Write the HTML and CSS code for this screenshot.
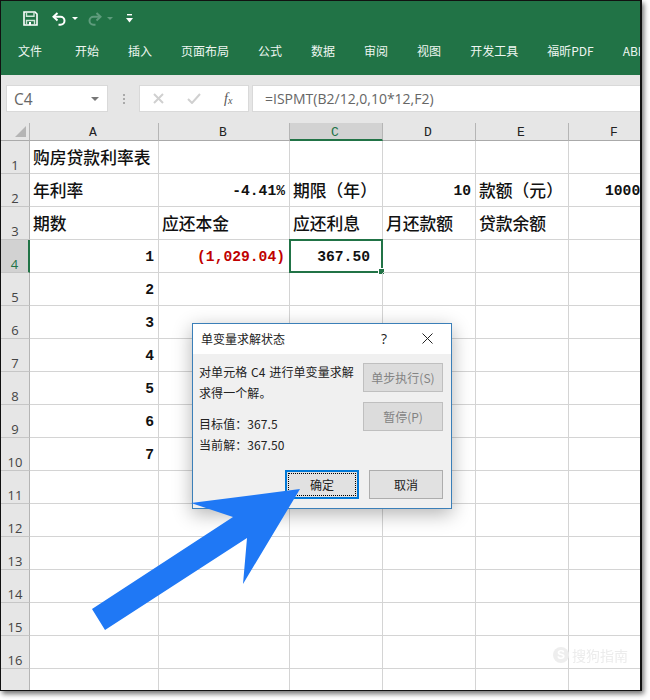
FILE: index.html
```html
<!DOCTYPE html>
<html lang="zh">
<head>
<meta charset="utf-8">
<title>单变量求解状态</title>
<link rel="stylesheet" href="styles.css">
</head>
<body>
<div class="window">
  <header class="ribbon">
    <div class="qat">
      <svg class="i-save" width="15" height="15" viewBox="0 0 15 15"><path d="M1 1h11l2 2v11H1z" fill="none" stroke="#fff" stroke-width="1.6"/><path d="M3.500 1v4.200h7.500V1" fill="none" stroke="#cfe6d8" stroke-width="1.4"/><path d="M3.500 14V9.500h8V14" fill="none" stroke="#cfe6d8" stroke-width="1.4"/><rect x="6" y="11" width="2" height="3" fill="#fff"/></svg>
      <svg class="i-undo" width="15" height="14" viewBox="0 0 15 14"><path d="M5.500 1 1.500 4.700 5.500 8.400" fill="none" stroke="#fff" stroke-width="2"/><path d="M2 4.700h6.500a4 4 0 0 1 0 8H6.500" fill="none" stroke="#fff" stroke-width="2"/></svg>
      <span class="caret"></span>
      <svg class="i-redo" width="15" height="14" viewBox="0 0 15 14"><path d="M9.500 1 13.500 4.700 9.500 8.400" fill="none" stroke="#5f9c7d" stroke-width="2"/><path d="M13 4.700H6.500a4 4 0 0 0 0 8h2" fill="none" stroke="#5f9c7d" stroke-width="2"/></svg>
      <span class="caret dim"></span>
      <svg class="i-more" width="7" height="9" viewBox="0 0 7 9"><rect x="1" y="0" width="5" height="1.400" fill="#fff"/><path d="M0 4h7L3.500 8.500z" fill="#fff"/></svg>
    </div>
    <nav class="tabs">
      <span class="file">文件</span><span>开始</span><span>插入</span><span>页面布局</span><span>公式</span><span>数据</span><span>审阅</span><span>视图</span><span>开发工具</span><span>福昕PDF</span><span>ABI</span>
    </nav>
  </header>
  <div class="fbar">
    <div class="namebox"><span>C4</span><i class="nb-caret"></i></div>
    <div class="dots"><i></i><i></i><i></i></div>
    <div class="fxbox">
      <svg width="11" height="11" viewBox="0 0 11 11"><path d="M1 1 10 10M10 1 1 10" stroke="#d0d0d0" stroke-width="2"/></svg>
      <svg width="14" height="11" viewBox="0 0 14 11"><path d="M1 6 5 10 13 1" fill="none" stroke="#d0d0d0" stroke-width="2"/></svg>
      <span class="fx">f<sub>x</sub></span>
    </div>
    <div class="formula">=ISPMT(B2/12,0,10*12,F2)</div>
  </div>
  <div class="sheet">
    <div class="corner"><i></i></div>
    <div class="ch">A</div><div class="ch">B</div><div class="ch sel">C</div><div class="ch">D</div><div class="ch">E</div><div class="ch">F</div>

    <div class="rh">1</div><div class="c">购房贷款利率表</div><div class="c"></div><div class="c"></div><div class="c"></div><div class="c"></div><div class="c"></div>
    <div class="rh">2</div><div class="c">年利率</div><div class="c n">-4.41%</div><div class="c">期限（年）</div><div class="c n">10</div><div class="c">款额（元）</div><div class="c n clip">1000</div>
    <div class="rh">3</div><div class="c">期数</div><div class="c">应还本金</div><div class="c">应还利息</div><div class="c">月还款额</div><div class="c">贷款余额</div><div class="c"></div>
    <div class="rh sel">4</div><div class="c n">1</div><div class="c n red">(1,029.04)</div><div class="c n active">367.50</div><div class="c"></div><div class="c"></div><div class="c"></div>
    <div class="rh">5</div><div class="c n">2</div><div class="c"></div><div class="c"></div><div class="c"></div><div class="c"></div><div class="c"></div>
    <div class="rh">6</div><div class="c n">3</div><div class="c"></div><div class="c"></div><div class="c"></div><div class="c"></div><div class="c"></div>
    <div class="rh">7</div><div class="c n">4</div><div class="c"></div><div class="c"></div><div class="c"></div><div class="c"></div><div class="c"></div>
    <div class="rh">8</div><div class="c n">5</div><div class="c"></div><div class="c"></div><div class="c"></div><div class="c"></div><div class="c"></div>
    <div class="rh">9</div><div class="c n">6</div><div class="c"></div><div class="c"></div><div class="c"></div><div class="c"></div><div class="c"></div>
    <div class="rh">10</div><div class="c n">7</div><div class="c"></div><div class="c"></div><div class="c"></div><div class="c"></div><div class="c"></div>
    <div class="rh">11</div><div class="c"></div><div class="c"></div><div class="c"></div><div class="c"></div><div class="c"></div><div class="c"></div>
    <div class="rh">12</div><div class="c"></div><div class="c"></div><div class="c"></div><div class="c"></div><div class="c"></div><div class="c"></div>
    <div class="rh">13</div><div class="c"></div><div class="c"></div><div class="c"></div><div class="c"></div><div class="c"></div><div class="c"></div>
    <div class="rh">14</div><div class="c"></div><div class="c"></div><div class="c"></div><div class="c"></div><div class="c"></div><div class="c"></div>
    <div class="rh">15</div><div class="c"></div><div class="c"></div><div class="c"></div><div class="c"></div><div class="c"></div><div class="c"></div>
    <div class="rh">16</div><div class="c"></div><div class="c"></div><div class="c"></div><div class="c"></div><div class="c"></div><div class="c"></div>
    <div class="rh"></div><div class="c"></div><div class="c"></div><div class="c"></div><div class="c"></div><div class="c"></div><div class="c"></div>
  </div>

  <section class="dialog">
    <div class="d-title">
      <span class="d-name">单变量求解状态</span>
      <span class="d-help">?</span>
      <svg class="d-close" width="11" height="11" viewBox="0 0 11 11"><path d="M.5.500 10.500 10.500M10.500.500.500 10.500" stroke="#222" stroke-width="1"/></svg>
    </div>
    <div class="d-body">
      <div class="d-main">
        <div class="d-msg">
          <p>对单元格 C4 进行单变量求解</p>
          <p>求得一个解。</p>
          <p class="d-gap">目标值：367.5</p>
          <p>当前解：367.50</p>
        </div>
        <div class="d-side">
          <div class="btn off">单步执行(S)</div>
          <div class="btn off">暂停(P)</div>
        </div>
      </div>
      <div class="d-foot">
        <div class="btn ok"><span>确定</span></div>
        <div class="btn cancel">取消</div>
      </div>
    </div>
  </section>

  <svg class="arrow" width="650" height="700" viewBox="1 1 650 700"><polygon points="92,609 105,630 247,538 243,584 300,489 191,503 233,517" fill="#1f78f5"/></svg>

  <div class="mark"><b>S</b><span>搜狗指南</span></div>
</div>
</body>
</html>
```
FILE: styles.css
```css
* { box-sizing: border-box; }
html, body { margin: 0; padding: 0; background: #fff; }
body { width: 650px; height: 700px; overflow: hidden; font-family: "Noto Sans CJK SC", sans-serif; }
p { margin: 0; }

.window {
  position: relative;
  width: 642px;
  height: 691px;
  border: 1px solid #111;
  border-right-width: 2px;
  background: #fff;
  overflow: hidden;
  box-shadow: 2px 3px 5px rgba(0,0,0,.55);
}
.ribbon { height: 74px; background: #217346; color: #fff; padding-top: 9px; }
.qat { display: flex; align-items: center; height: 17px; padding-left: 22px; }
.i-undo { margin-left: 14px; }
.caret { width: 0; height: 0; margin-left: 5px; border: 3px solid transparent; border-top-color: #fff; border-bottom: 0; }
.caret.dim { border-top-color: #5f9c7d; }
.i-redo { margin-left: 9px; }
.i-more { margin-left: 13px; }
.tabs { display: flex; gap: 29px; padding: 12px 0 0 17px; font-size: 12px; line-height: 24px; white-space: nowrap; color: #eef6f1; }
.file { margin-right: 4px; }

.fbar { display: flex; align-items: stretch; height: 48px; padding: 10px 0 11px 5px; background: #e6e6e6; }
.namebox { width: 102px; background: #fff; border: 1px solid #d9d9d9; display: flex; align-items: center; justify-content: space-between; padding: 0 8px 0 7px; font: 15.5px "Open Sans", sans-serif; color: #666; }
.nb-caret { width: 0; height: 0; border: 4px solid transparent; border-top: 4px solid #777; border-bottom: 0; }
.dots { width: 31px; display: flex; flex-direction: column; align-items: center; justify-content: center; gap: 2px; }
.dots i { width: 2px; height: 2px; background: #aaa; }
.fxbox { width: 110px; background: #fff; border: 1px solid #d9d9d9; display: flex; align-items: center; padding-left: 13px; gap: 23px; }
.fx { font: italic 14px "Liberation Serif", serif; color: #555; }
.fx sub { font-size: 10px; vertical-align: -1px; line-height: 0; }
.formula { flex: 1; margin-left: 3px; background: #fff; border: 1px solid #d9d9d9; border-right: 0; padding-left: 12px; font: 14px/25px "Open Sans", sans-serif; color: #666; white-space: nowrap; }

.sheet { display: grid; grid-template-columns: 29px 129px 131px 93px 93px 93px 93px; grid-template-rows: 18px repeat(17, 33px); }
.corner { background: #e6e6e6; border-right: 1px solid #b5b5b5; border-bottom: 1px solid #aaa; position: relative; }
.corner i { position: absolute; right: 3px; bottom: 3px; width: 0; height: 0; border-style: solid; border-width: 0 0 11px 11px; border-color: transparent transparent #b5b5b5 transparent; }
.ch { background: #e6e6e6; border-right: 1px solid #b5b5b5; border-bottom: 1px solid #aaa; text-align: center; padding-right: 2px; font: 13px/20px "Liberation Mono", monospace; color: #222; }
.ch.sel { background: #d2d2d2; border-bottom: 2px solid #217346; color: #217346; }
.rh { background: #e6e6e6; border-right: 1px solid #b5b5b5; border-bottom: 1px solid #c6c6c6; font: 13px/16px "Open Sans", sans-serif; color: #444; display: flex; align-items: flex-end; justify-content: center; }
.rh.sel { background: #d2d2d2; border-right: 2px solid #217346; color: #217346; }
.c { border-right: 1px solid #d4d4d4; border-bottom: 1px solid #d4d4d4; padding: 0 0 0 3px; font: 500 16.8px/33px "Noto Sans CJK SC", sans-serif; color: #111; white-space: nowrap; overflow: visible; position: relative; }
.c.n { text-align: right; padding: 0 4px 0 0; font: 700 14.67px/35px "Liberation Mono", "Noto Sans CJK SC", monospace; }
.c.clip { text-align: left; padding-left: 36px; overflow: hidden; }
.c.red { color: #c00000; }
.c.active { padding-right: 12px; }
.c.active::before { content: ""; position: absolute; inset: -1px -1px -1px -1px; border: 2px solid #217346; pointer-events: none; }
.c.active::after { content: ""; position: absolute; right: -3px; bottom: -3px; width: 5px; height: 5px; background: #217346; border: 1px solid #fff; }

.dialog { position: absolute; left: 191px; top: 322px; width: 260px; height: 186px; border: 1px solid #3b7fb8; background: #f0f0f0; box-shadow: 0 5px 18px rgba(0,0,0,.3); font-size: 12px; color: #222; display: flex; flex-direction: column; }
.d-title { height: 30px; background: #fff; display: flex; align-items: center; padding: 0 18px 2px 8px; }
.d-name { flex: 1; }
.d-help { margin-right: 35px; font: 14px "Open Sans", sans-serif; }
.d-body { flex: 1; display: flex; flex-direction: column; padding: 9px 8px 9px 6px; }
.d-main { flex: 1; display: flex; justify-content: space-between; }
.d-msg { line-height: 21px; white-space: nowrap; margin-top: -2px; word-spacing: 1px; letter-spacing: .08px; }
.d-gap { margin-top: 10px; }
.d-side { display: flex; flex-direction: column; gap: 10px; }
.btn { height: 29px; width: 80px; display: flex; align-items: center; justify-content: center; border: 1px solid #adadad; background: #e1e1e1; white-space: nowrap; }
.btn.off { color: #838383; border-color: #bfbfbf; background: #dcdcdc; }
.d-foot { display: flex; justify-content: flex-end; gap: 10px; }
.btn.ok { width: 74px; border: 2px solid #0078d7; padding: 1px; background: #e1e1e1; }
.btn.ok span { flex: 1; align-self: stretch; text-align: center; line-height: 21px; border: 1px dotted #000; }
.btn.cancel { width: 74px; }

.arrow { position: absolute; left: 0; top: 0; pointer-events: none; }

.mark { position: absolute; left: 552px; top: 644px; display: flex; align-items: center; gap: 3px; color: #ececec; filter: blur(.7px); pointer-events: none; }
.mark b { width: 16px; height: 16px; border-radius: 50%; background: #eee; color: #fff; font: 700 12px/16px "Liberation Sans", sans-serif; text-align: center; }
.mark span { font-size: 14px; }
```
